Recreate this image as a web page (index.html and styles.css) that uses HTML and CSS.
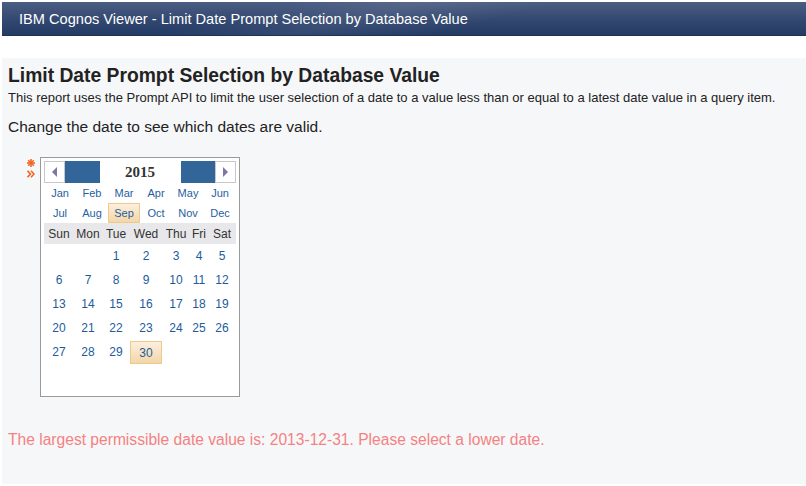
FILE: index.html
```html
<!DOCTYPE html>
<html>
<head>
<meta charset="utf-8">
<link rel="stylesheet" href="styles.css">
</head>
<body>
<div class="header">IBM Cognos Viewer - Limit Date Prompt Selection by Database Value</div>
<div class="panel">
  <h1 class="title">Limit Date Prompt Selection by Database Value</h1>
  <p class="desc">This report uses the Prompt API to limit the user selection of a date to a value less than or equal to a latest date value in a query item.</p>
  <p class="lead">Change the date to see which dates are valid.</p>
  <div class="prompt">
    <div class="marks">
      <svg width="8" height="8" viewBox="0 0 8 8" class="star"><g stroke="#f26522" stroke-width="1.6"><line x1="4" y1="0" x2="4" y2="8"/><line x1="0" y1="4" x2="8" y2="4"/><line x1="1.2" y1="1.2" x2="6.8" y2="6.8"/><line x1="6.8" y1="1.2" x2="1.2" y2="6.8"/></g></svg>
      <svg width="8" height="8" viewBox="0 0 8 8" class="arrow"><g fill="none" stroke="#f26522" stroke-width="1.6"><polyline points="0.5,0.8 3.5,4 0.5,7.2"/><polyline points="4,0.8 7,4 4,7.2"/></g></svg>
    </div>
    <div class="calendar">
      <div class="yearbar">
        <div class="nav"><span class="tri-left"></span></div>
        <div class="bluefill"></div>
        <div class="year">2015</div>
        <div class="bluefill"></div>
        <div class="nav"><span class="tri-right"></span></div>
      </div>
      <div class="months">
        <span>Jan</span><span>Feb</span><span>Mar</span><span>Apr</span><span>May</span><span>Jun</span>
        <span>Jul</span><span>Aug</span><span class="sel">Sep</span><span>Oct</span><span>Nov</span><span>Dec</span>
      </div>
      <table class="days">
        <colgroup><col class="c30"><col class="c28"><col class="c28"><col class="c32"><col class="c28"><col class="c18"><col class="c28"></colgroup>
        <thead><tr><th>Sun</th><th>Mon</th><th>Tue</th><th>Wed</th><th>Thu</th><th>Fri</th><th>Sat</th></tr></thead>
        <tbody>
          <tr><td></td><td></td><td>1</td><td>2</td><td>3</td><td>4</td><td>5</td></tr>
          <tr><td>6</td><td>7</td><td>8</td><td>9</td><td>10</td><td>11</td><td>12</td></tr>
          <tr><td>13</td><td>14</td><td>15</td><td>16</td><td>17</td><td>18</td><td>19</td></tr>
          <tr><td>20</td><td>21</td><td>22</td><td>23</td><td>24</td><td>25</td><td>26</td></tr>
          <tr><td>27</td><td>28</td><td>29</td><td><span class="sel">30</span></td><td></td><td></td><td></td></tr>
        </tbody>
      </table>
    </div>
  </div>
  <p class="error">The largest permissible date value is: 2013-12-31. Please select a lower date.</p>
</div>
</body>
</html>
```
FILE: styles.css
```css
html, body { margin: 0; padding: 0; background: #fff; }
body { font-family: "Liberation Sans", Arial, sans-serif; width: 806px; height: 486px; overflow: hidden; }

.header {
  margin: 2px 0 0 2px;
  height: 34px;
  line-height: 34px;
  padding-left: 17px;
  color: #fff;
  font-size: 14.6px;
  background:
    linear-gradient(166deg, rgba(255,255,255,0) 30%, rgba(255,255,255,0.07) 45%, rgba(255,255,255,0) 60%),
    linear-gradient(#4b5d82, #30466f 60%, #243b65);
  border-bottom: 1px solid #1d3158;
  box-sizing: border-box;
}

.panel {
  margin: 22px 0 0 2px;
  height: 426px;
  background: #f6f7f9;
  padding: 7px 6px 0;
  box-sizing: border-box;
  color: #222;
}

.title { margin: 0; font-size: 19.3px; line-height: 22px; font-weight: bold; color: #222; }
.desc { margin: 3px 0 0; font-size: 13px; line-height: 15px; }
.lead { margin: 13px 0 0; font-size: 15.5px; line-height: 18px; }

.prompt { display: flex; margin-top: 21px; }
.marks { width: 32px; display: flex; flex-direction: column; align-items: flex-end; padding: 2px 5px 0 0; box-sizing: border-box; gap: 3px; }
.marks svg { display: block; }

.calendar {
  width: 200px;
  height: 240px;
  border: 1px solid #9a9a9a;
  background: #fff;
  padding: 3px;
  box-sizing: border-box;
}

.yearbar { display: flex; height: 22px; }
.nav {
  width: 21px;
  box-sizing: border-box;
  border: 1px solid #c8c8c8;
  background: #fff;
  display: flex; align-items: center; justify-content: center;
}
.tri-left { width: 0; height: 0; border-top: 5px solid transparent; border-bottom: 5px solid transparent; border-right: 5px solid #7b77a6; }
.tri-right { width: 0; height: 0; border-top: 5px solid transparent; border-bottom: 5px solid transparent; border-left: 5px solid #7b77a6; }
.bluefill { flex: 1; background: #326699; }
.year {
  width: 81px;
  margin: 2px 0;
  background: #fff;
  text-align: center;
  font-weight: bold;
  font-size: 15px;
  line-height: 18px;
  color: #333;
  font-family: "Liberation Serif", serif;
}

.months { display: grid; grid-template-columns: repeat(6, 32px); grid-auto-rows: 20px; }
.months span {
  display: flex; align-items: center; justify-content: center;
  font-size: 11px; color: #1f5f9f;
  box-sizing: border-box;
}
.months .sel, .days .sel {
  background: linear-gradient(#fcefdf, #f4d6a8);
  border: 1px solid #edc98e;
}

.days { border-collapse: collapse; table-layout: fixed; width: 192px; }
.c30 { width: 30px; } .c28 { width: 28px; } .c32 { width: 32px; } .c18 { width: 18px; }
.days th {
  background: #e8e7e9;
  height: 21px;
  padding: 0;
  font-weight: normal;
  font-size: 12px;
  color: #333;
  text-align: center;
}
.days td {
  height: 24px;
  padding: 0;
  text-align: center;
  font-size: 12px;
  color: #1b5c9c;
}
.days td .sel { display: block; height: 23px; line-height: 23px; box-sizing: border-box; }

.error { margin: 34px 0 0; font-size: 15.6px; line-height: 18px; color: #f48282; }
```
